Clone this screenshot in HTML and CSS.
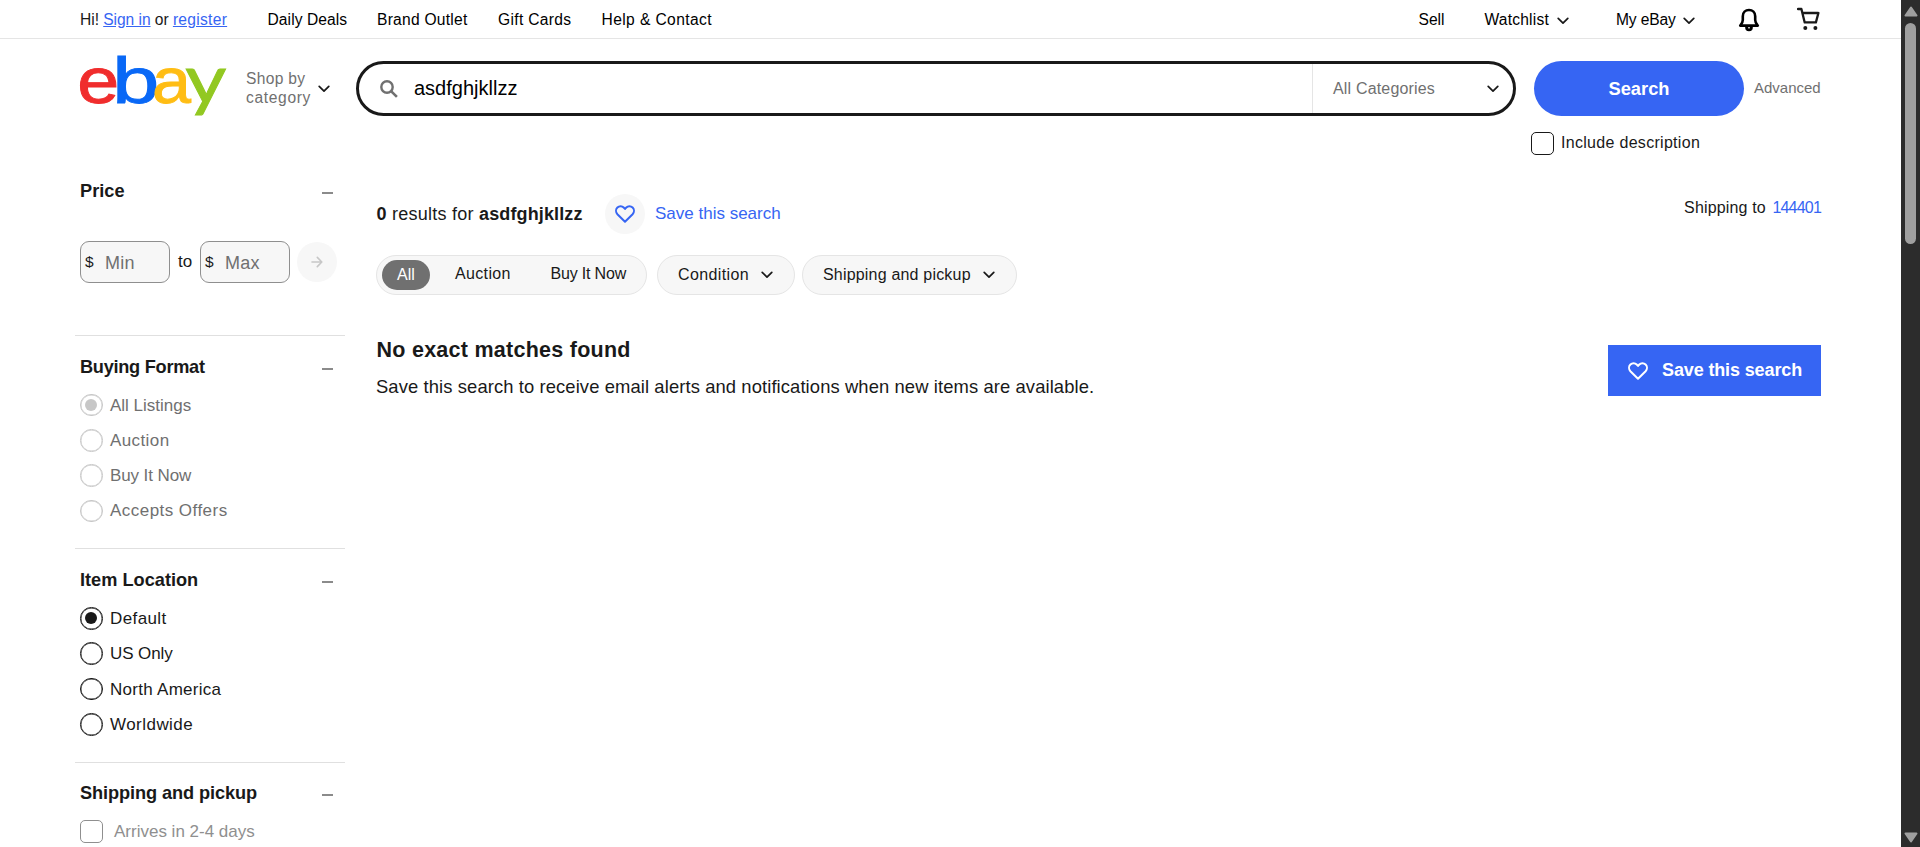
FILE: index.html
```html
<!DOCTYPE html>
<html lang="en">
<head>
<meta charset="utf-8">
<title>asdfghjkllzz for sale | eBay</title>
<link rel="stylesheet" href="styles.css">
</head>
<body>
<svg class="defs" width="0" height="0">
  <symbol id="chevron" viewBox="0 0 12 8"><path d="M1.2 1.3 6 6.2 10.8 1.3" fill="none" stroke="#191919" stroke-width="1.7" stroke-linecap="round" stroke-linejoin="round"/></symbol>
  <symbol id="heart" viewBox="0 0 20 18"><path d="M10 16.8 2.4 9.2C.6 7.3.6 4.3 2.4 2.5c1.8-1.8 4.6-1.8 6.3 0L10 3.9l1.3-1.4c1.7-1.8 4.5-1.8 6.3 0 1.8 1.8 1.8 4.8 0 6.7Z" fill="none" stroke="currentColor" stroke-width="2" stroke-linejoin="round"/></symbol>
</svg>
<div class="window">
  <div class="page">
    <nav class="topbar">
      <span class="greet">Hi! <a href="#">Sign in</a> or <a href="#" class="register">register</a></span>
      <span class="daily">Daily Deals</span>
      <span class="brand">Brand Outlet</span>
      <span class="gift">Gift Cards</span>
      <span class="help">Help &amp; Contact</span>
      <span class="sell">Sell</span>
      <span class="watch"><span>Watchlist</span><svg class="chev"><use href="#chevron"/></svg></span>
      <span class="my"><span>My eBay</span><svg class="chev"><use href="#chevron"/></svg></span>
      <svg class="bell" viewBox="0 0 22 24"><path d="M2.2 17.6c1.700-1.700 2.600-3 2.600-5.600V8.300C4.800 4.600 7.500 2 11 2s6.200 2.600 6.200 6.300V12c0 2.600.9 3.900 2.600 5.600Z" fill="none" stroke="#000" stroke-width="2.600" stroke-linejoin="round"/><path d="M7.800 19.500h6.400a3.200 3.200 0 0 1-6.400 0Z" fill="#000" stroke="#000" stroke-width="1.200"/><path d="M10 19.800h2" stroke="#fff" stroke-width="1"/></svg>
      <svg class="cart" viewBox="0 0 23 24"><path d="M1 2h3.400l3.300 13.400h11.200L21.400 6H5.400" fill="none" stroke="#191919" stroke-width="2.300" stroke-linecap="round" stroke-linejoin="round"/><circle cx="8.300" cy="21" r="2" fill="#191919"/><circle cx="18.400" cy="21" r="2" fill="#191919"/></svg>
    </nav>

    <header class="header">
      <svg class="logo" viewBox="0 0 150 64">
        <text x="-2.700" y="50" textLength="42" lengthAdjust="spacingAndGlyphs" fill="#f02d2d" stroke="#f02d2d">e</text>
        <text x="32.300" y="50" textLength="47" lengthAdjust="spacingAndGlyphs" fill="#0968f6" stroke="#0968f6">b</text>
        <text x="72" y="50" textLength="39" lengthAdjust="spacingAndGlyphs" fill="#ffbd14" stroke="#ffbd14">a</text>
        <text class="tail" x="105.300" y="50" textLength="41" lengthAdjust="spacingAndGlyphs" fill="#92c821" stroke="#92c821">y</text>
      </svg>
      <div class="shop"><span>Shop by<br><span class="category">category</span></span><svg class="chev"><use href="#chevron"/></svg></div>
      <div class="searchbox">
        <svg class="glass" viewBox="0 0 18 18"><circle cx="7" cy="7" r="5.700" fill="none" stroke="#707070" stroke-width="2.400"/><path d="m11.300 11.300 5.600 5.600" stroke="#707070" stroke-width="2.600"/></svg>
        <span class="query">asdfghjkllzz</span>
        <div class="cats"><span>All Categories</span><svg class="chev"><use href="#chevron"/></svg></div>
      </div>
      <div class="go">Search</div>
      <span class="advanced">Advanced</span>
    </header>
    <div class="include"><i class="box dark"></i><span>Include description</span></div>

    <div class="columns">
      <aside class="side">
        <section class="price">
          <h3><span>Price</span><i class="minus"></i></h3>
          <div class="range">
            <div class="field"><b>$</b><span>Min</span></div>
            <span class="to">to</span>
            <div class="field"><b>$</b><span>Max</span></div>
            <div class="arrow"><svg viewBox="0 0 12 12"><path d="M1 6h9.500M6.300 1.400 10.800 6l-4.500 4.600" fill="none" stroke="#c7c7c7" stroke-width="1.600" stroke-linecap="round" stroke-linejoin="round"/></svg></div>
          </div>
        </section>
        <section class="disabled">
          <h3><span class="t-format">Buying Format</span><i class="minus"></i></h3>
          <div class="row"><i class="radio on"></i><span>All Listings</span></div>
          <div class="row"><i class="radio"></i><span class="ls35">Auction</span></div>
          <div class="row"><i class="radio"></i><span class="lsn">Buy It Now</span></div>
          <div class="row"><i class="radio"></i><span class="ls4">Accepts Offers</span></div>
        </section>
        <section>
          <h3><span>Item Location</span><i class="minus"></i></h3>
          <div class="row"><i class="radio on"></i><span class="ls35">Default</span></div>
          <div class="row"><i class="radio"></i><span class="lsn">US Only</span></div>
          <div class="row"><i class="radio"></i><span class="ls2">North America</span></div>
          <div class="row"><i class="radio"></i><span class="ls4">Worldwide</span></div>
        </section>
        <section>
          <h3><span class="t-ship">Shipping and pickup</span><i class="minus"></i></h3>
          <div class="row faded"><i class="box"></i><span>Arrives in 2-4 days</span></div>
        </section>
      </aside>

      <main class="main">
        <div class="summary">
          <span class="count"><b>0</b> results for <b class="term">asdfghjkllzz</b></span>
          <span class="heartbtn"><svg><use href="#heart"/></svg></span>
          <a class="savelink">Save this search</a>
          <span class="shipto">Shipping to <a>144401</a></span>
        </div>
        <div class="pills">
          <div class="group"><span class="all">All</span><span class="auction">Auction</span><span class="bin">Buy It Now</span></div>
          <div class="pill cond"><span>Condition</span><svg class="chev"><use href="#chevron"/></svg></div>
          <div class="pill ship"><span>Shipping and pickup</span><svg class="chev"><use href="#chevron"/></svg></div>
        </div>
        <div class="nomatch">
          <div>
            <h2>No exact matches found</h2>
            <p>Save this search to receive email alerts and notifications when new items are available.</p>
          </div>
          <div class="savebtn"><svg><use href="#heart"/></svg><span>Save this search</span></div>
        </div>
      </main>
    </div>
  </div>
  <div class="scrollbar">
    <svg viewBox="0 0 14 11"><path d="M7 1.500 12.500 9.500h-11Z" fill="#9f9f9f" stroke="#9f9f9f" stroke-width="2" stroke-linejoin="round"/></svg>
    <div class="thumb"></div>
    <svg viewBox="0 0 14 11"><path d="M7 9.500 12.500 1.500h-11Z" fill="#9f9f9f" stroke="#9f9f9f" stroke-width="2" stroke-linejoin="round"/></svg>
  </div>
</div>
</body>
</html>
```

FILE: styles.css
```css
* { box-sizing: border-box; }
body { margin: 0; background: #fff; color: #191919; font-family: "Liberation Sans", Arial, sans-serif; overflow: hidden; }
.defs { position: absolute; }
a { color: #3665f3; }
h2, h3, p { margin: 0; }
span { white-space: nowrap; }
.window { display: flex; width: 1920px; height: 847px; overflow: hidden; }
.page { width: 1901px; }
.chev { width: 12px; height: 8px; flex: none; }

.topbar { display: flex; align-items: center; height: 39px; padding: 1px 80px 0; border-bottom: 1px solid #e5e5e5; font-size: 15.6px; color: #000; }
.topbar > * { flex: none; }
.greet { width: 187.500px; letter-spacing: -.05px; color: #191919; }
.register { letter-spacing: .28px; }
.daily { width: 109.500px; letter-spacing: .08px; }
.brand { width: 121px; letter-spacing: .25px; }
.gift { width: 103.500px; letter-spacing: .32px; }
.help { letter-spacing: .4px; }
.sell { width: 66px; margin-left: auto; }
.watch { display: flex; align-items: center; gap: 8px; width: 131.500px; letter-spacing: .2px; }
.my { display: flex; align-items: center; gap: 7px; width: 122px; letter-spacing: -.15px; }
.watch .chev, .my .chev { margin-top: 2px; }
.bell { width: 22px; height: 24px; margin-right: 37px; }
.cart { width: 23px; height: 24px; margin: -1px 1px 0 0; }

.header { display: flex; align-items: center; height: 55px; margin-top: 22px; padding-left: 80px; }
.header > * { flex: none; }
.logo { width: 150px; height: 64px; margin-top: -7px; font-size: 64px; stroke-width: .9px; overflow: visible; }
.tail { font-family: Lato, sans-serif; font-size: 67px; }
.shop { display: flex; align-items: center; width: 126px; padding-left: 16px; gap: 7px; font-size: 15.600px; line-height: 18.500px; letter-spacing: .3px; color: #707070; }
.category { letter-spacing: .65px; }
.searchbox { display: flex; align-items: center; width: 1160px; height: 55px; border: 3px solid #191919; border-radius: 28px; padding-left: 21px; }
.glass { width: 18px; height: 18px; }
.query { margin-left: 16px; font-size: 20px; color: #000; }
.cats { display: flex; align-items: center; justify-content: space-between; width: 201px; height: 49px; margin-left: auto; padding: 0 14px 0 20px; border-left: 1px solid #e5e5e5; font-size: 16px; letter-spacing: .17px; color: #707070; }
.go { width: 210px; height: 55px; margin-left: 18px; border-radius: 28px; background: #3665f3; color: #fff; font-size: 18.300px; font-weight: 700; line-height: 56px; text-align: center; }
.advanced { margin: -2px 0 0 10px; font-size: 15px; color: #707070; }
.include { display: flex; align-items: center; height: 22px; margin: 16px 0 0 1531px; gap: 7px; font-size: 16px; letter-spacing: .3px; }
.box { width: 23px; height: 23px; border: 1.500px solid #8f8f8f; border-radius: 5px; flex: none; }
.box.dark { border-color: #191919; }

.columns { display: flex; padding: 6px 80px 0 75px; }
.side { width: 270px; flex: none; }
.side section { height: 213.400px; padding: 20px 0 0 5px; border-bottom: 1px solid #e0e0e0; }
.side .price { height: 176px; }
.side h3 { display: flex; align-items: center; justify-content: space-between; height: 21px; margin-bottom: 10.400px; padding-right: 12px; font-size: 18.200px; line-height: 22px; }
.t-format { letter-spacing: -.28px; }
.t-ship { letter-spacing: -.1px; }
.minus { width: 11px; height: 2px; margin-top: 4px; background: #8b8b8b; }
.range { display: flex; align-items: center; margin-top: 40px; }
.field { display: flex; align-items: center; width: 90px; height: 42px; padding-left: 4px; border: 1px solid #8f8f8f; border-radius: 9px; background: #f7f7f7; }
.field b { width: 20px; font-size: 15.500px; font-weight: 400; }
.field span { padding-top: 3px; font-size: 18px; letter-spacing: .3px; color: #707070; }
.to { width: 30px; text-align: center; font-size: 17px; }
.arrow { display: flex; align-items: center; justify-content: center; width: 40px; height: 40px; margin-left: 7px; border-radius: 50%; background: #f7f7f7; }
.arrow svg { width: 12px; height: 12px; }
.row { display: flex; align-items: center; height: 35.300px; gap: 7.500px; font-size: 17px; }
.row span { padding-top: 1px; }
.disabled .row { color: #707070; }
.radio { display: flex; align-items: center; justify-content: center; width: 22.500px; height: 22.500px; border: 1.500px solid #191919; border-radius: 50%; flex: none; box-shadow: inset 0 0 0 .4px #191919; }
.radio.on::after { content: ""; width: 12px; height: 12px; border-radius: 50%; background: #191919; }
.disabled .radio { border-color: #c7c7c7; box-shadow: inset 0 0 0 .4px #c7c7c7; }
.disabled .radio::after { background: #c7c7c7; }
.faded { color: #8f8f8f; gap: 11px; }
.ls2 { letter-spacing: .28px; }
.ls35 { letter-spacing: .4px; }
.ls4 { letter-spacing: .46px; }
.lsn { letter-spacing: -.1px; }

.main { flex: 1; padding: 34px 0 0 31px; }
.summary { display: flex; align-items: center; height: 40px; }
.count { width: 229px; padding-left: .5px; font-size: 18px; letter-spacing: .25px; }
.term { letter-spacing: .12px; }
.heartbtn { display: flex; align-items: center; justify-content: center; width: 40px; height: 40px; border-radius: 50%; background: #f7f7f7; color: #3665f3; }
.heartbtn svg, .savebtn svg { width: 20px; height: 18px; }
.savelink { margin-left: 10px; font-size: 17px; }
.shipto { margin: -12px 0 0 auto; font-size: 16px; letter-spacing: .15px; }
.shipto a { margin-left: 2px; letter-spacing: -.8px; }
.pills { display: flex; height: 40px; margin-top: 21px; font-size: 16px; }
.group, .pill { display: flex; align-items: center; border: 1px solid #e5e5e5; border-radius: 20px; background: #f7f7f7; }
.group { width: 271px; padding: 0 5px 2px; }
.all { width: 48px; height: 30px; margin-top: 2px; border-radius: 15px; background: #707070; color: #fff; line-height: 29px; text-align: center; }
.auction { width: 95.500px; margin-left: 25px; letter-spacing: .35px; }
.bin { letter-spacing: -.18px; }
.pill { padding-left: 20px; gap: 12px; }
.cond { width: 138px; margin-left: 10px; letter-spacing: .38px; }
.ship { width: 215px; margin-left: 7px; letter-spacing: .19px; }
.nomatch { display: flex; justify-content: space-between; margin-top: 41px; }
.nomatch h2 { padding: 1px 0 0 .5px; font-size: 21.500px; line-height: 26px; letter-spacing: .26px; }
.nomatch p { margin-top: 12px; font-size: 18.400px; line-height: 24px; letter-spacing: .1px; }
.savebtn { display: flex; align-items: center; gap: 14px; width: 213px; height: 51px; margin-top: 9px; padding-left: 20px; background: #3665f3; color: #fff; font-size: 18px; font-weight: 700; letter-spacing: -.13px; }

.scrollbar { display: flex; flex-direction: column; align-items: center; width: 19px; padding: 6px 0 4px; background: #2c2c2c; }
.scrollbar svg { width: 14px; height: 11px; flex: none; }
.thumb { width: 11px; height: 221px; margin: 6px 0 auto; border-radius: 6px; background: #9f9f9f; }
```
